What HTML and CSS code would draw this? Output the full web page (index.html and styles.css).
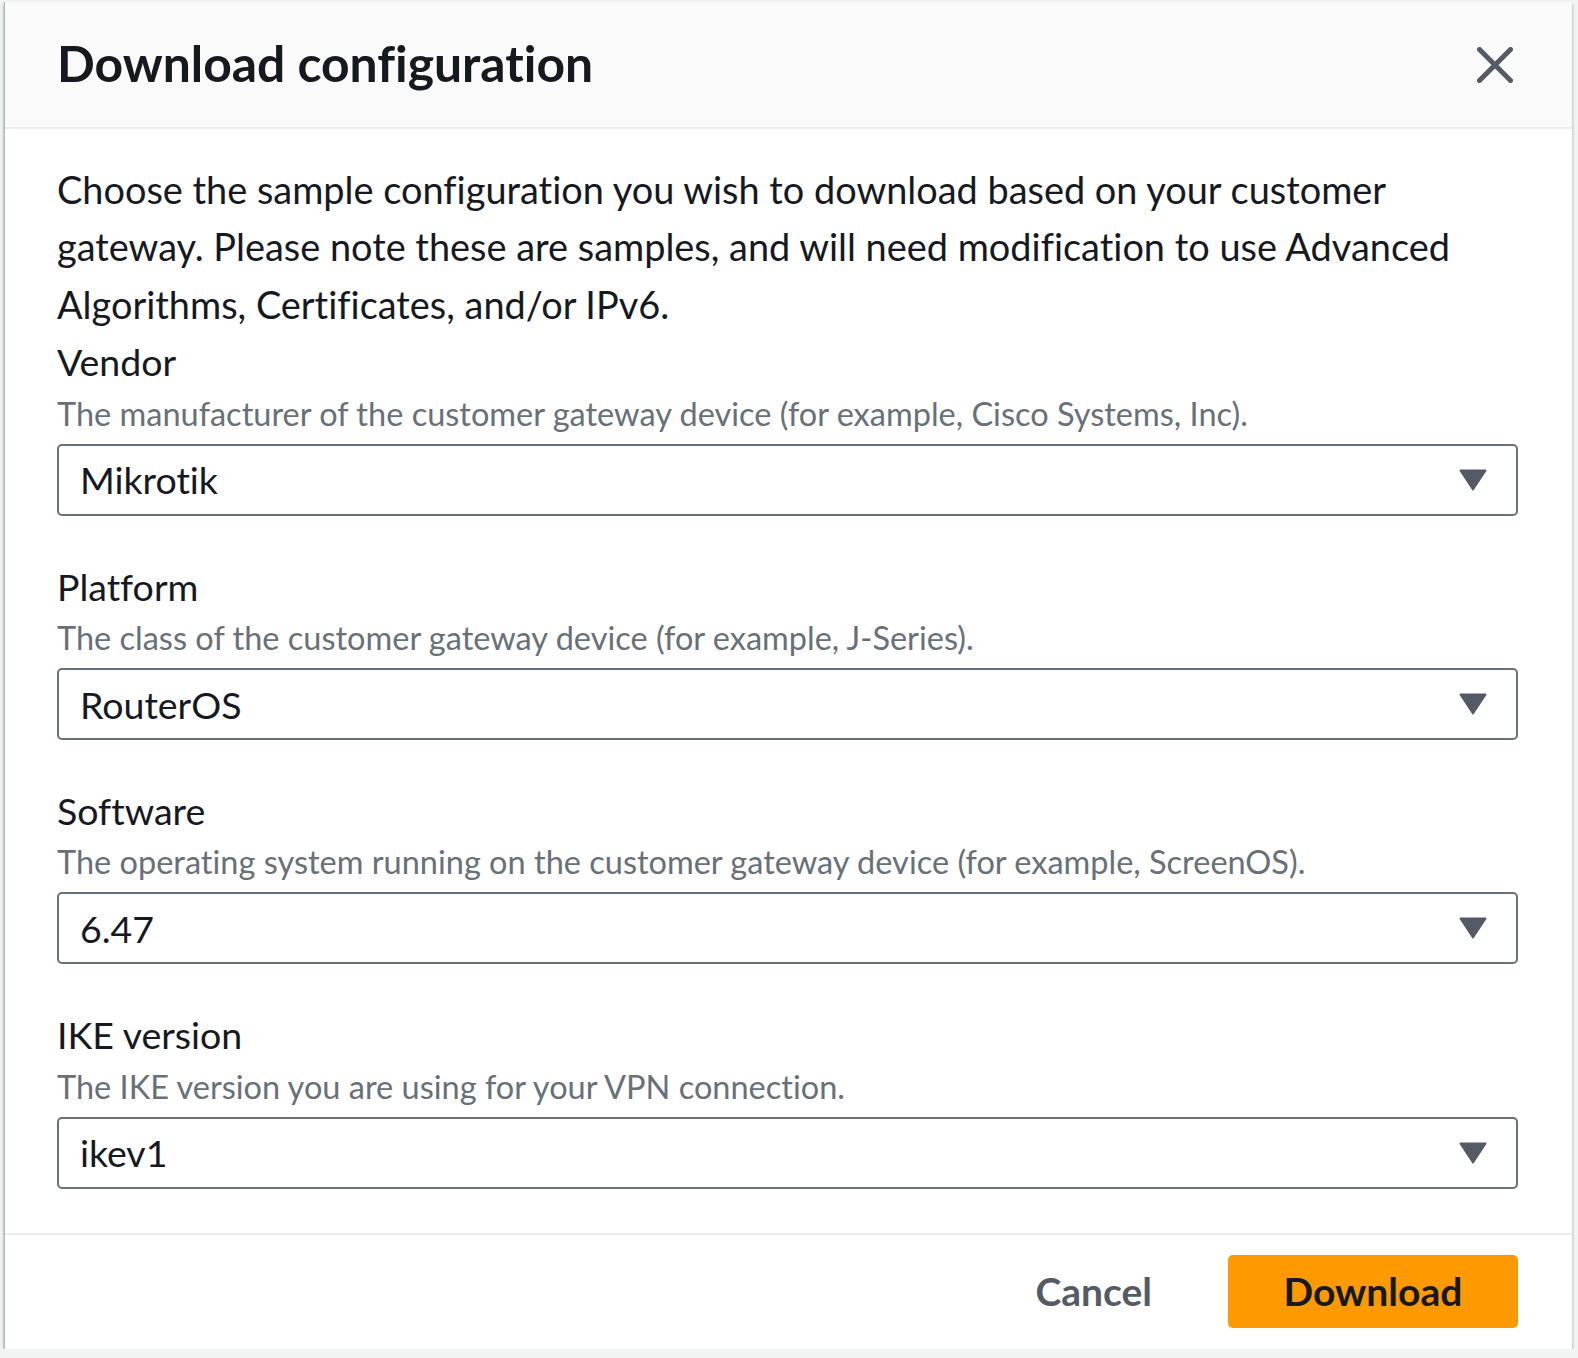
FILE: index.html
```html
<!DOCTYPE html>
<html lang="en">
<head>
    <meta charset="UTF-8">
    <title>Download configuration</title>
    <link rel="stylesheet" href="styles.css">
</head>
<body>
    <div class="modal">
        <header class="modal-header">
            <h2>Download configuration</h2>
            <button class="close-btn" aria-label="Close">
                <svg width="36" height="36" viewBox="0 0 36 36">
                    <path d="M2.5 2.5 L33.5 33.5 M33.5 2.5 L2.5 33.5" stroke="#545b64" stroke-width="5" stroke-linecap="round" fill="none"/>
                </svg>
            </button>
        </header>

        <div class="modal-body">
            <p class="intro">Choose the sample configuration you wish to download based on your customer gateway. Please note these are samples, and will need modification to use Advanced Algorithms, Certificates, and/or IPv6.</p>

            <div class="field">
                <label>Vendor</label>
                <p class="hint">The manufacturer of the customer gateway device (for example, Cisco Systems, Inc).</p>
                <div class="select-box">
                    <span>Mikrotik</span>
                    <svg class="caret" width="28" height="22" viewBox="0 0 28 22"><path d="M1.5 1.5 H26.5 L14 20.5 Z" fill="#545b64" stroke="#545b64" stroke-width="2" stroke-linejoin="round"/></svg>
                </div>
            </div>

            <div class="field">
                <label>Platform</label>
                <p class="hint">The class of the customer gateway device (for example, J-Series).</p>
                <div class="select-box">
                    <span>RouterOS</span>
                    <svg class="caret" width="28" height="22" viewBox="0 0 28 22"><path d="M1.5 1.5 H26.5 L14 20.5 Z" fill="#545b64" stroke="#545b64" stroke-width="2" stroke-linejoin="round"/></svg>
                </div>
            </div>

            <div class="field">
                <label>Software</label>
                <p class="hint">The operating system running on the customer gateway device (for example, ScreenOS).</p>
                <div class="select-box">
                    <span>6.47</span>
                    <svg class="caret" width="28" height="22" viewBox="0 0 28 22"><path d="M1.5 1.5 H26.5 L14 20.5 Z" fill="#545b64" stroke="#545b64" stroke-width="2" stroke-linejoin="round"/></svg>
                </div>
            </div>

            <div class="field">
                <label>IKE version</label>
                <p class="hint">The IKE version you are using for your VPN connection.</p>
                <div class="select-box">
                    <span>ikev1</span>
                    <svg class="caret" width="28" height="22" viewBox="0 0 28 22"><path d="M1.5 1.5 H26.5 L14 20.5 Z" fill="#545b64" stroke="#545b64" stroke-width="2" stroke-linejoin="round"/></svg>
                </div>
            </div>
        </div>

        <footer class="modal-footer">
            <button class="btn-link">Cancel</button>
            <button class="btn-primary">Download</button>
        </footer>
    </div>
</body>
</html>
```

FILE: styles.css
```css
/* reset */
* {
    margin: 0;
    padding: 0;
    box-sizing: border-box;
}

body {
    font-family: Lato, "Open Sans", sans-serif;
    font-variant-ligatures: none;
    color: #16191f;
    background: #f2f3f3;
}

.modal {
    width: 1568px;
    margin: 2px 0 0 4px;
    background: #fff;
    border-left: 1px solid #aab7b8;
    box-shadow: 0 2px 3px rgba(0, 28, 36, 0.4);
}

/* header */
.modal-header {
    height: 127px;
    background: #fafafa;
    border-bottom: 2px solid #eaeded;
    display: flex;
    align-items: center;
    justify-content: space-between;
    padding: 0 59px 0 52px;
}

.modal-header h2 {
    font-size: 49.8px;
    font-weight: 700;
    margin-top: -3px;
}

.close-btn {
    background: none;
    border: none;
    display: flex;
}

/* body */
.modal-body {
    padding: 32px 54px 44px 52px;
}

.intro {
    font-size: 37.9px;
    line-height: 57.4px;
}

.field + .field {
    margin-top: 42px;
}

.field label {
    display: block;
    font-size: 37.5px;
    line-height: 57.4px;
}

.hint {
    font-size: 32.5px;
    line-height: 46px;
    color: #687078;
    margin-bottom: 7px;
}

.select-box {
    height: 72px;
    border: 2px solid #687078;
    border-radius: 5px;
    display: flex;
    align-items: center;
    justify-content: space-between;
    padding: 0 29px 0 21px;
    font-size: 37.5px;
}

/* footer */
.modal-footer {
    border-top: 2px solid #eaeded;
    display: flex;
    justify-content: flex-end;
    align-items: center;
    gap: 76px;
    padding: 20px 54px 21px 0;
}

.btn-link {
    background: none;
    border: none;
    font-family: inherit;
    font-size: 39px;
    font-weight: 700;
    color: #545b64;
}

.btn-primary {
    width: 290px;
    height: 73px;
    background: #ff9900;
    border: none;
    border-radius: 5px;
    font-family: inherit;
    font-size: 39px;
    font-weight: 700;
    color: #16191f;
}
```
